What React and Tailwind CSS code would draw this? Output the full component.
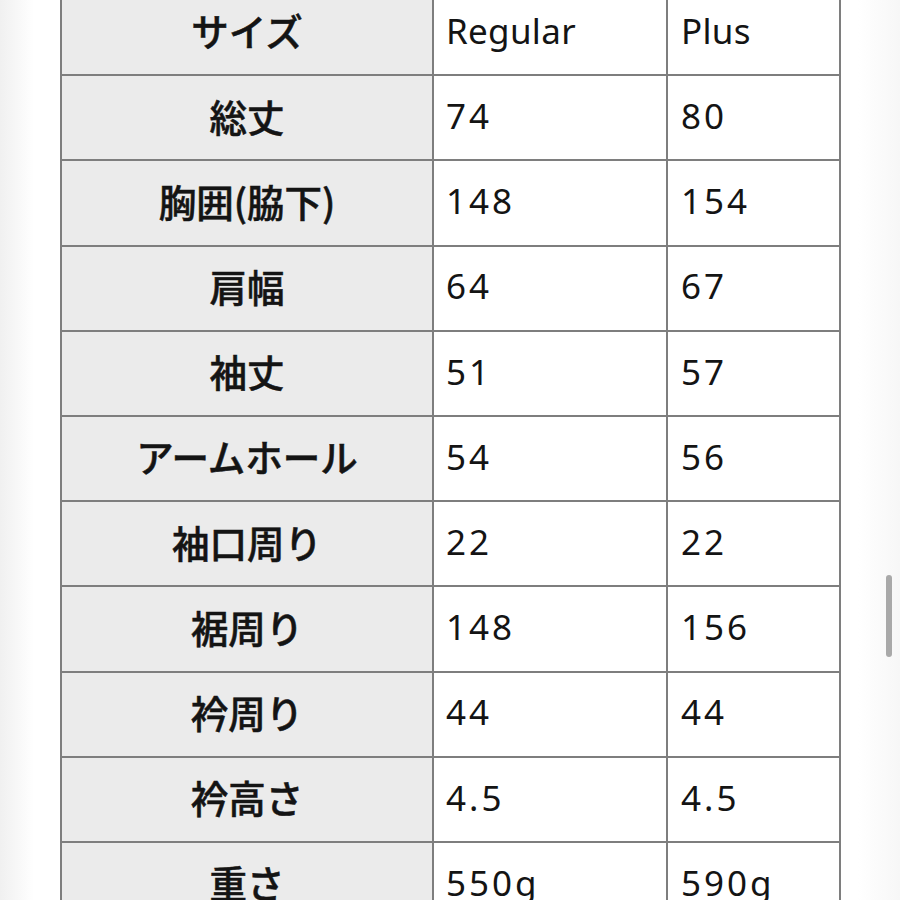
import React from "react";

const rows = [
  ["サイズ", "Regular", "Plus"],
  ["総丈", "74", "80"],
  ["胸囲(脇下)", "148", "154"],
  ["肩幅", "64", "67"],
  ["袖丈", "51", "57"],
  ["アームホール", "54", "56"],
  ["袖口周り", "22", "22"],
  ["裾周り", "148", "156"],
  ["衿周り", "44", "44"],
  ["衿高さ", "4.5", "4.5"],
  ["重さ", "550g", "590g"],
];

function Val({ v }) {
  const numeric = /^[0-9.]+g?$/.test(v);
  return (
    <span className={numeric ? "tracking-[3px]" : "tracking-[0.3px]"}>{v}</span>
  );
}

export default function App() {
  return (
    <div
      className="relative h-[900px] w-[900px] overflow-hidden bg-[linear-gradient(to_right,#f0f0f0_0px,#f6f6f6_14px,#ffffff_34px,#ffffff_858px,#f7f7f7_900px)] text-[#141414]"
      style={{ fontFamily: '"Noto Sans", "Noto Sans CJK JP", sans-serif' }}
    >
      <div className="ml-[60px] -mt-[9px] w-[781px] border-l-2 border-[#7e7e7e]">
        {rows.map((r, i) => (
          <div key={i} className="grid h-[85.2px] grid-cols-[372px_234px_173px]">
            <div
              className="flex items-center justify-center border-b-2 border-r-2 border-[#7e7e7e] bg-[#ebebeb] pb-[4px] text-[37.5px] font-medium [-webkit-text-stroke:0.5px_#141414]"
              style={{ fontFamily: '"Noto Sans CJK JP", "Noto Sans", sans-serif' }}
            >
              {r[0]}
            </div>
            <div className="flex items-center border-b-2 border-r-2 border-[#7e7e7e] bg-white pb-[3px] pl-[12px] text-[35px]">
              <Val v={r[1]} />
            </div>
            <div className="flex items-center border-b-2 border-r-2 border-[#7e7e7e] bg-white pb-[3px] pl-[13px] text-[35px]">
              <Val v={r[2]} />
            </div>
          </div>
        ))}
      </div>
      <div className="absolute left-[886px] top-[575px] h-[82px] w-[6px] rounded-full bg-[#a9a9a9]" />
    </div>
  );
}
